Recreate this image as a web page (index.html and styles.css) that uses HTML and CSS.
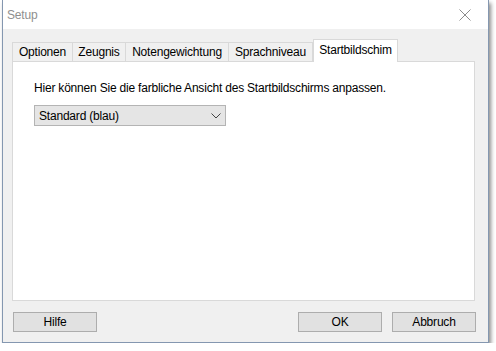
FILE: index.html
```html
<!DOCTYPE html>
<html lang="de">
<head>
<meta charset="utf-8">
<title>Setup</title>
<link rel="stylesheet" href="styles.css">
</head>
<body>
<div class="window">
  <div class="titlebar">
    <span class="title">Setup</span>
    <svg class="close" width="12" height="12" viewBox="0 0 12 12"><path d="M0.5 0.5 L11.5 11.5 M11.5 0.5 L0.5 11.5" stroke="#8c8c8c" stroke-width="1" fill="none"/></svg>
  </div>
  <div class="content">
    <div class="tabs">
      <div class="tab t1">Optionen</div>
      <div class="tab t2">Zeugnis</div>
      <div class="tab t3">Notengewichtung</div>
      <div class="tab t4">Sprachniveau</div>
      <div class="tab active t5">Startbildschim</div>
    </div>
    <div class="panel">
      <p class="label">Hier können Sie die farbliche Ansicht des Startbildschirms anpassen.</p>
      <div class="select">
        <span>Standard (blau)</span>
        <svg width="10" height="6" viewBox="0 0 10 6"><path d="M0.5 0.5 L5 5 L9.5 0.5" stroke="#444" stroke-width="1" fill="none"/></svg>
      </div>
    </div>
    <div class="buttons">
      <button class="btn">Hilfe</button>
      <div class="spacer"></div>
      <button class="btn">OK</button>
      <button class="btn">Abbruch</button>
    </div>
  </div>
</div>
</body>
</html>
```
FILE: styles.css
```css
html, body {
  margin: 0;
  padding: 0;
  background: #ffffff;
}
body {
  font-family: "Liberation Sans", Arial, sans-serif;
  font-size: 12px;
  letter-spacing: -0.2px;
  color: #000;
}
.window {
  margin-left: 2px;
  width: 487px;
  height: 343px;
  box-sizing: border-box;
  border: 1px solid #8497b0;
  border-top: none;
  background: #f0f0f0;
  box-shadow: 2px 3px 4px rgba(0,0,0,0.45);
  display: flex;
  flex-direction: column;
}
.titlebar {
  height: 29px;
  background: #ffffff;
  display: flex;
  align-items: center;
  justify-content: space-between;
  padding: 0 17px 0 4px;
  flex: none;
}
.title {
  color: #8f8f8f;
  font-size: 12px;
}
.content {
  flex: 1;
  display: flex;
  flex-direction: column;
  padding: 10px 12px 0 9px;
}
.tabs {
  display: flex;
  align-items: flex-end;
  height: 22px;
  position: relative;
  z-index: 1;
}
.tab {
  height: 19px;
  box-sizing: border-box;
  border: 1px solid #d9d9d9;
  border-bottom: none;
  margin-right: -1px;
  display: flex;
  align-items: center;
  justify-content: center;
  background: #f0f0f0;
  color: #000;
}
.t1 { width: 61px; }
.t2 { width: 54px; }
.t3 { width: 104px; }
.t4 { width: 85px; }
.t5 { width: 85px; margin-left: 1px; }
.tab.active {
  height: 23px;
  background: #ffffff;
  margin-bottom: -1px;
  align-items: flex-start;
  padding-top: 3px;
}
.panel {
  width: 463px;
  height: 240px;
  box-sizing: border-box;
  border: 1px solid #d9d9d9;
  background: #ffffff;
  padding: 19px 0 0 21px;
}
.label {
  margin: 0 0 10px 0;
  line-height: 14px;
}
.select {
  width: 192px;
  height: 21px;
  box-sizing: border-box;
  border: 1px solid #b4b4b4;
  background: #e5e5e5;
  display: flex;
  align-items: center;
  justify-content: space-between;
  padding: 0 4px 0 4px;
}
.buttons {
  display: flex;
  margin-top: 11px;
  padding-left: 1px;
}
.spacer { flex: 1; }
.btn {
  width: 84px;
  height: 20px;
  box-sizing: border-box;
  border: 1px solid #adadad;
  background: #e1e1e1;
  font-family: "Liberation Sans", Arial, sans-serif;
  font-size: 12px;
  letter-spacing: -0.2px;
  color: #000;
  padding: 0;
  margin-left: 10px;
}
.btn:first-child { margin-left: 0; }
```
